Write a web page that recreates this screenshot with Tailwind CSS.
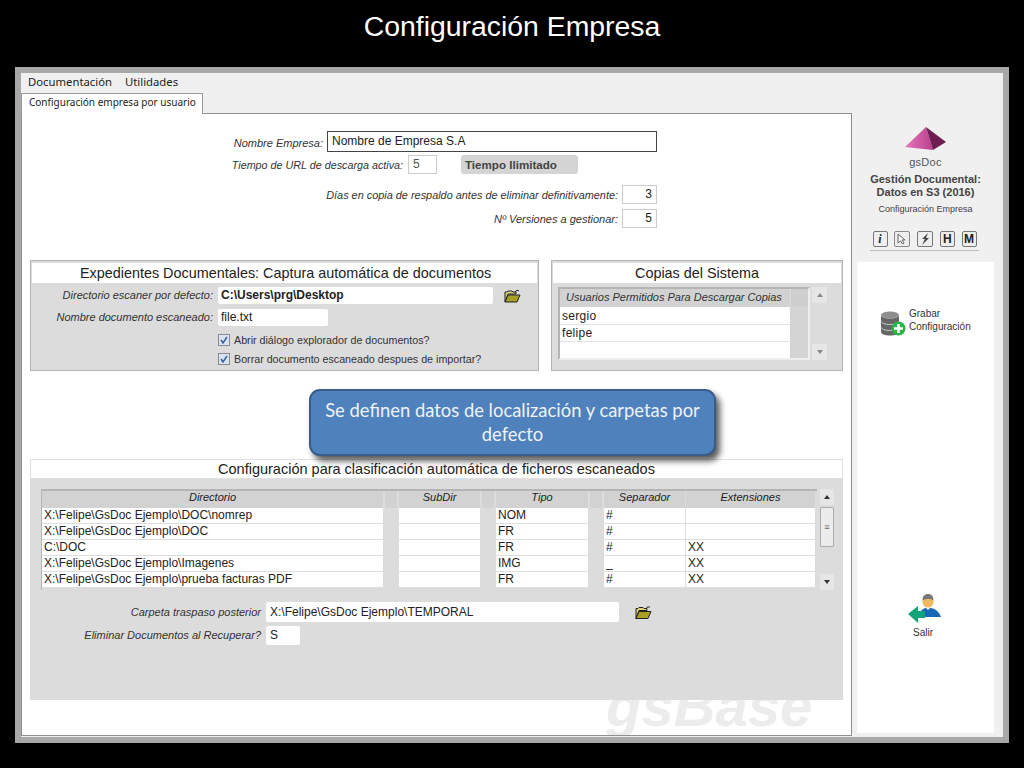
<!DOCTYPE html>
<html lang="es">
<head>
  <meta charset="UTF-8">
  <title>Configuración Empresa</title>
  <script src="https://cdn.jsdelivr.net/npm/@tailwindcss/browser@4"></script>
</head>
<body class="bg-black w-[1024px] h-[768px] overflow-hidden [font-family:'Liberation_Sans',sans-serif] text-[#333]">
  <h1 class="h-[67px] pt-[8px] text-center text-white text-[28.4px] leading-[36px]">Configuración Empresa</h1>

  <!-- ventana -->
  <div class="ml-[15px] w-[994px] h-[676px] border-[6px] border-[#a8a8a8] bg-[#f0f0f0] flex flex-col">
    <div class="h-[20px] pb-[2px] flex items-center gap-[13px] pl-[7px] text-[11.3px] text-[#222] [font-family:'Noto_Sans',sans-serif]">
      <span>Documentación</span>
      <span>Utilidades</span>
    </div>
    <div class="flex">
      <!-- zona principal -->
      <div class="w-[831px] flex flex-col">
        <div class="relative z-10 w-[182px] h-[21px] -mb-px bg-white border border-b-0 border-[#999] flex items-center pl-[7px] pb-[3px] text-[10px] text-[#222] [font-family:'Noto_Sans',sans-serif]">Configuración empresa por usuario</div>
        <div class="relative h-[623px] bg-white border border-[#8f8f8f] overflow-hidden">
          <div class="absolute left-[584px] top-[557px] text-[#ececec] text-[58px] leading-[70px] font-bold italic">gsBase</div>

          <div class="relative">
            <div class="w-[635px] h-[21px] mt-[17px] flex items-center justify-end">
              <span class="italic text-[11px] mr-[4px] pt-[4px]">Nombre Empresa:</span>
              <div class="w-[330px] h-[21px] border border-[#444] pl-[4px] text-[12px] leading-[18px] text-[#222]">Nombre de Empresa S.A</div>
            </div>
            <div class="w-[556px] h-[19px] mt-[3px] flex items-center justify-end">
              <span class="italic text-[10.75px] mr-[5px] pt-[1px]">Tiempo de URL de descarga activa:</span>
              <div class="w-[29px] h-[19px] border border-[#ccc] pl-[4px] text-[12px] leading-[17px] text-[#555]">5</div>
              <div class="ml-[24px] w-[117px] h-[19px] rounded-[3px] bg-[#d4d4d4] pl-[4px] text-[11.6px] leading-[19px] font-bold text-[#444]">Tiempo Ilimitado</div>
            </div>
            <div class="w-[635px] h-[19px] mt-[11px] flex items-center justify-end">
              <span class="italic text-[10.9px] mr-[4px] pt-[1px]">Días en copia de respaldo antes de eliminar definitivamente:</span>
              <div class="w-[35px] h-[19px] border border-[#ccc] pr-[4px] text-right text-[12px] leading-[17px] text-[#222]">3</div>
            </div>
            <div class="w-[635px] h-[19px] mt-[5px] flex items-center justify-end">
              <span class="italic text-[11px] mr-[4px] pt-[1px]">Nº Versiones a gestionar:</span>
              <div class="w-[35px] h-[19px] border border-[#ccc] pr-[4px] text-right text-[12px] leading-[17px] text-[#222]">5</div>
            </div>

            <div class="flex mt-[32px] ml-[8px] gap-[12px]">
              <!-- expedientes -->
              <div class="w-[509px] h-[111px] bg-[#dcdcdc] border border-[#b4b4b4] px-px pt-[2px]">
                <div class="h-[20px] bg-white pl-[2px] text-center text-[14.4px] leading-[20px] text-[#222]">Expedientes Documentales: Captura automática de documentos</div>
                <div class="flex items-center h-[17px] mt-[4px]">
                  <span class="w-[182px] text-right italic text-[11px] pr-[1px]">Directorio escaner por defecto:</span>
                  <div class="ml-[4px] w-[275px] h-[17px] rounded-[2px] bg-white pl-[3px] text-[12px] leading-[17px] font-bold text-[#222]">C:\Users\prg\Desktop</div>
                  <svg class="ml-[11px]" width="17" height="14" viewBox="0 0 17 14"><path d="M1 13V3h2l1-1h4l1 1h3v2H4L1 13z" fill="#d8d27a" stroke="#222"/><path d="M1 13l3-7h12l-3 7z" fill="#a8a022" stroke="#222"/><path d="M11 3c1-2 3-2 4-1" fill="none" stroke="#222"/></svg>
                </div>
                <div class="flex items-center h-[17px] mt-[5px]">
                  <span class="w-[182px] text-right italic text-[11px] pr-[1px]">Nombre documento escaneado:</span>
                  <div class="ml-[4px] w-[110px] h-[17px] rounded-[2px] bg-white pl-[3px] text-[12px] leading-[17px] text-[#222]">file.txt</div>
                </div>
                <div class="flex items-center h-[12px] mt-[8px] pl-[186px] gap-[4px] text-[10.7px]">
                  <span class="w-[12px] h-[12px] border border-[#8a8a8a] bg-[#d7e3f3] flex items-center justify-center">
                    <svg width="8" height="8" viewBox="0 0 8 8"><path d="M1 4l2 3 4-6" fill="none" stroke="#3a5f9e" stroke-width="1.5"/></svg>
                  </span>
                  <span>Abrir diálogo explorador de documentos?</span>
                </div>
                <div class="flex items-center h-[12px] mt-[7px] pl-[186px] gap-[4px] text-[10.7px]">
                  <span class="w-[12px] h-[12px] border border-[#8a8a8a] bg-[#d7e3f3] flex items-center justify-center">
                    <svg width="8" height="8" viewBox="0 0 8 8"><path d="M1 4l2 3 4-6" fill="none" stroke="#3a5f9e" stroke-width="1.5"/></svg>
                  </span>
                  <span>Borrar documento escaneado despues de importar?</span>
                </div>
              </div>

              <!-- copias -->
              <div class="w-[292px] h-[111px] bg-[#dcdcdc] border border-[#b4b4b4] px-px pt-[2px]">
                <div class="h-[20px] bg-white text-center text-[14.4px] leading-[20px] text-[#222]">Copias del Sistema</div>
                <div class="flex mt-[4px] ml-[5px]">
                  <div class="w-[252px] h-[73px] border-2 border-[#b4b4b4] border-b-[#eee] border-r-[#eee] flex flex-col">
                    <div class="flex h-[18px]">
                      <div class="w-[230px] bg-[#d2d2d2] pl-[6px] italic text-[11px] leading-[17px]">Usuarios Permitidos Para Descargar Copias</div>
                      <div class="flex-1 bg-[#cfcfcf] ml-px"></div>
                    </div>
                    <div class="flex-1 flex">
                      <div class="w-[230px] bg-white pt-px text-[12px] tracking-[0.3px] leading-[17px] text-[#222]">
                        <div class="h-[17px] pl-[2px] border-b border-[#e4e4e4]">sergio</div>
                        <div class="h-[17px] pl-[2px] border-b border-[#e4e4e4]">felipe</div>
                      </div>
                      <div class="flex-1 bg-[#d4d4d4]"></div>
                    </div>
                  </div>
                  <div class="ml-[2px] w-[15px] h-[73px] flex flex-col justify-between">
                    <div class="h-[16px] bg-[#e6e6e6] flex items-center justify-center"><span class="w-0 h-0 border-x-[3px] border-x-transparent border-b-[4px] border-b-[#888]"></span></div>
                    <div class="h-[16px] bg-[#e6e6e6] flex items-center justify-center"><span class="w-0 h-0 border-x-[3px] border-x-transparent border-t-[4px] border-t-[#888]"></span></div>
                  </div>
                </div>
              </div>
            </div>

            <!-- clasificacion -->
            <div class="w-[813px] h-[241px] mt-[88px] ml-[8px] bg-[#dcdcdc] flex flex-col">
              <div class="h-[20px] bg-white border border-[#e0e0e0] text-center text-[14.5px] leading-[19px] text-[#222]">Configuración para clasificación automática de ficheros escaneados</div>
              <div class="flex mt-[10px] ml-[11px]">
                <div class="w-[776px] h-[101px] border-t-2 border-l border-[#b4b4b4] text-[12px] text-[#222]">
                  <div class="grid grid-cols-[341px_16px_81px_16px_92px_16px_81px_130px] h-[17px] text-[11px] italic leading-[13px] text-center">
                    <div class="bg-[#d2d2d2]">Directorio</div><div class="bg-[#d2d2d2] mx-[2px]"></div>
                    <div class="bg-[#d2d2d2]">SubDir</div><div class="bg-[#d2d2d2] mx-[2px]"></div>
                    <div class="bg-[#d2d2d2]">Tipo</div><div class="bg-[#d2d2d2] mx-[2px]"></div>
                    <div class="bg-[#d2d2d2]">Separador</div>
                    <div class="bg-[#d2d2d2] ml-px">Extensiones</div>
                  </div>
                  <div class="grid grid-cols-[341px_16px_81px_16px_92px_16px_81px_130px] auto-rows-[16px] leading-[15px]">
                    <div class="bg-white border-b border-[#ddd] pl-[2px]">X:\Felipe\GsDoc Ejemplo\DOC\nomrep</div><div></div>
                    <div class="bg-white border-b border-[#ddd]"></div><div></div>
                    <div class="bg-white border-b border-[#ddd] pl-[2px]">NOM</div><div></div>
                    <div class="bg-white border-b border-[#ddd] pl-[2px]">#</div>
                    <div class="bg-white border-b border-l border-[#ddd] pl-[2px]"></div>

                    <div class="bg-white border-b border-[#ddd] pl-[2px]">X:\Felipe\GsDoc Ejemplo\DOC</div><div></div>
                    <div class="bg-white border-b border-[#ddd]"></div><div></div>
                    <div class="bg-white border-b border-[#ddd] pl-[2px]">FR</div><div></div>
                    <div class="bg-white border-b border-[#ddd] pl-[2px]">#</div>
                    <div class="bg-white border-b border-l border-[#ddd] pl-[2px]"></div>

                    <div class="bg-white border-b border-[#ddd] pl-[2px]">C:\DOC</div><div></div>
                    <div class="bg-white border-b border-[#ddd]"></div><div></div>
                    <div class="bg-white border-b border-[#ddd] pl-[2px]">FR</div><div></div>
                    <div class="bg-white border-b border-[#ddd] pl-[2px]">#</div>
                    <div class="bg-white border-b border-l border-[#ddd] pl-[2px]">XX</div>

                    <div class="bg-white border-b border-[#ddd] pl-[2px]">X:\Felipe\GsDoc Ejemplo\Imagenes</div><div></div>
                    <div class="bg-white border-b border-[#ddd]"></div><div></div>
                    <div class="bg-white border-b border-[#ddd] pl-[2px]">IMG</div><div></div>
                    <div class="bg-white border-b border-[#ddd] pl-[2px]">_</div>
                    <div class="bg-white border-b border-l border-[#ddd] pl-[2px]">XX</div>

                    <div class="bg-white border-b border-[#ddd] pl-[2px]">X:\Felipe\GsDoc Ejemplo\prueba facturas PDF</div><div></div>
                    <div class="bg-white border-b border-[#ddd]"></div><div></div>
                    <div class="bg-white border-b border-[#ddd] pl-[2px]">FR</div><div></div>
                    <div class="bg-white border-b border-[#ddd] pl-[2px]">#</div>
                    <div class="bg-white border-b border-l border-[#ddd] pl-[2px]">XX</div>
                  </div>
                </div>
                <div class="ml-[3px] w-[14px] h-[101px] flex flex-col">
                  <div class="h-[16px] bg-[#e6e6e6] flex items-center justify-center"><span class="w-0 h-0 border-x-[3px] border-x-transparent border-b-[4px] border-b-[#333]"></span></div>
                  <div class="mt-[2px] h-[40px] rounded-[2px] bg-[#ececec] border border-[#aaa] flex items-center justify-center text-[9px] leading-[3px] text-[#666]">≡</div>
                  <div class="mt-auto h-[16px] bg-[#e6e6e6] flex items-center justify-center"><span class="w-0 h-0 border-x-[3px] border-x-transparent border-t-[4px] border-t-[#333]"></span></div>
                </div>
              </div>
              <div class="flex items-center h-[20px] mt-[12px]">
                <span class="w-[231px] text-right italic text-[11px]">Carpeta traspaso posterior</span>
                <div class="ml-[5px] w-[353px] h-[20px] rounded-[2px] bg-white pl-[4px] text-[12px] leading-[20px] text-[#222]">X:\Felipe\GsDoc Ejemplo\TEMPORAL</div>
                <svg class="ml-[16px]" width="17" height="15" viewBox="0 0 17 14"><path d="M1 13V3h2l1-1h4l1 1h3v2H4L1 13z" fill="#d8d27a" stroke="#222"/><path d="M1 13l3-7h12l-3 7z" fill="#a8a022" stroke="#222"/><path d="M11 3c1-2 3-2 4-1" fill="none" stroke="#222"/></svg>
              </div>
              <div class="flex items-center h-[19px] mt-[4px]">
                <span class="w-[231px] text-right italic text-[11px]">Eliminar Documentos al Recuperar?</span>
                <div class="ml-[5px] w-[34px] h-[19px] rounded-[2px] bg-white pl-[4px] text-[12px] leading-[19px] text-[#222]">S</div>
              </div>
            </div>

            <!-- nota -->
            <div class="absolute left-[287px] top-[258px] w-[407px] h-[67px] rounded-[11px] bg-[#4f81bd] border-2 border-[#385d8a] shadow-[4px_5px_6px_rgba(0,0,0,0.65)] flex items-center justify-center text-center text-[#eef3f9] text-[18.4px] leading-[24px] px-[8px] pb-[2px] [font-family:'Lato',sans-serif]">Se definen datos de localización y carpetas por defecto</div>
          </div>
        </div>
      </div>

      <!-- lateral -->
      <div class="ml-[5px] w-[137px] h-[640px] flex flex-col">
        <div class="h-[169px] flex flex-col items-center pt-[34px]">
          <svg width="41" height="23" viewBox="0 0 41 23">
            <defs><linearGradient id="piramide" x1="0" y1="0" x2="1" y2="0"><stop offset="0" stop-color="#e678bb"/><stop offset="1" stop-color="#b93f8c"/></linearGradient></defs>
            <path d="M21 0L0 20l28 3z" fill="url(#piramide)"/>
            <path d="M21 0l20 15-13 8z" fill="#6d1f52"/>
          </svg>
          <div class="mt-[5px] text-[11px] leading-[14px] text-[#555] tracking-[0.3px]">gsDoc</div>
          <div class="mt-[4px] text-[11px] leading-[13px] font-bold text-center text-[#444]">Gestión Documental:<br>Datos en S3 (2016)</div>
          <div class="mt-[4px] text-[9px] leading-[12px] text-[#444]">Configuración Empresa</div>
          <div class="mt-[16px] mr-[3px] w-[109px] h-[20px] border-b border-[#bbb] flex justify-between pl-[3px] pr-[2px]">
            <span class="w-[15px] h-[16px] border border-[#777] rounded-[2px] bg-[#eee] text-center text-[12px] leading-[14px] font-bold italic [font-family:'Liberation_Serif',serif] text-[#222]">i</span>
            <span class="w-[16px] h-[16px] border border-[#888] rounded-[2px] bg-[#eee] flex items-center justify-center"><svg width="10" height="12" viewBox="0 0 10 12"><path d="M1 1v9l2.500-2 2 3 1.500-1-2-3h3z" fill="#f4f4f4" stroke="#666"/></svg></span>
            <span class="w-[16px] h-[16px] border border-[#777] rounded-[2px] bg-[#eee] flex items-center justify-center"><svg width="10" height="12" viewBox="0 0 10 12"><path d="M8 0L2 6h3l-3 6 7-7H6z" fill="#444"/></svg></span>
            <span class="w-[15px] h-[16px] border border-[#777] rounded-[2px] bg-[#eee] text-center text-[12px] leading-[14px] font-bold text-[#222]">H</span>
            <span class="w-[15px] h-[16px] border border-[#777] rounded-[2px] bg-[#eee] text-center text-[12px] leading-[14px] font-bold text-[#222]">M</span>
          </div>
        </div>
        <div class="flex-1 h-[471px] bg-white relative">
          <div class="pt-[49px] ml-[23px] flex items-start gap-[3px]">
            <svg width="26" height="25" viewBox="0 0 26 25">
              <ellipse cx="10" cy="4" rx="9" ry="3.500" fill="#8f8f8f"/>
              <path d="M1 4v17c0 2 4 3.500 9 3.500s9-1.500 9-3.500V4c0 2-4 3.500-9 3.500S1 6 1 4z" fill="#666"/>
              <path d="M1 10c0 2 4 3.500 9 3.500s9-1.500 9-3.500M1 16c0 2 4 3.500 9 3.500s9-1.500 9-3.500" fill="none" stroke="#ccc"/>
              <circle cx="18.500" cy="17.500" r="7" fill="#2cb34a"/>
              <path d="M18.500 13v9M14 17.500h9" stroke="#fff" stroke-width="2.500"/>
            </svg>
            <div class="-mt-[4px] text-[10px] leading-[13px] text-[#333]">Grabar<br>Configuración</div>
          </div>
          <div class="absolute left-[51px] top-[331px] w-[34px] flex flex-col items-center">
            <svg width="34" height="32" viewBox="0 0 34 32">
              <circle cx="20" cy="9" r="5.500" fill="#f0b860"/>
              <path d="M14.500 8c0-5 2-7 5.500-7s5.500 2 5.500 7c-2-3-9-3-11 0z" fill="#777"/>
              <path d="M12 22c0-5 4-7 6-7l2 2 2-2c4 0 9 3 11 9H12z" fill="#1769b5"/>
              <path d="M0 21l10-8v5h7v7h-7v5z" fill="#12a57c"/>
            </svg>
            <div class="mt-[1px] mr-[4px] text-[10px] leading-[13px] text-[#333]">Salir</div>
          </div>
        </div>
      </div>
    </div>
  </div>
</body>
</html>
